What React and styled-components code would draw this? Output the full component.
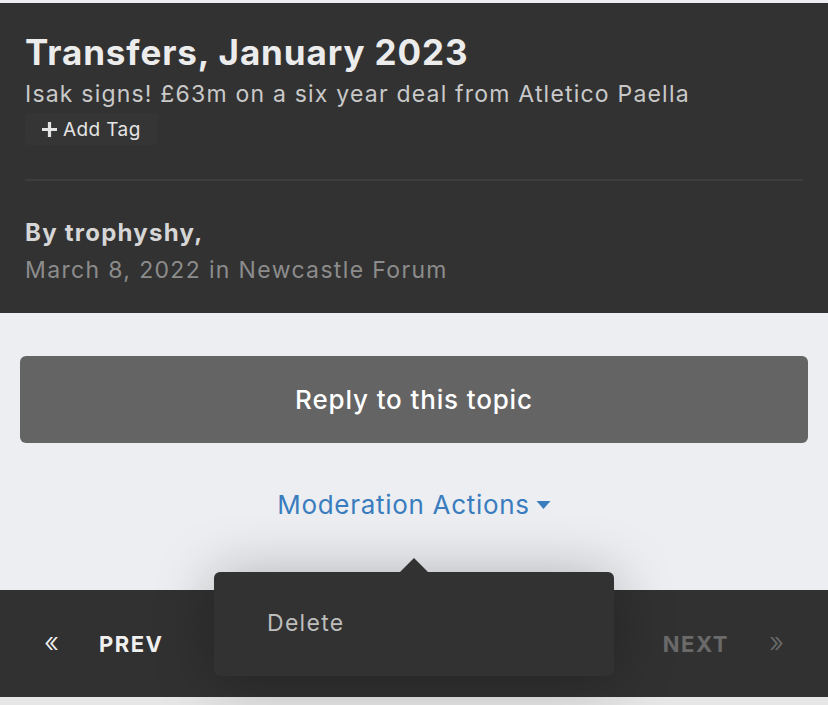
import React from 'react';
import styled, {createGlobalStyle} from 'styled-components';

const GlobalStyle = createGlobalStyle`
  body {
    margin: 0;
    background: #eceef1;
    font-family: Inter, "Noto Sans", sans-serif;
    -webkit-font-smoothing: antialiased;
  }
`;

export default function App() {
  return (
    <Page>
      <GlobalStyle />
      <Header>
        <Title>Transfers, January 2023</Title>
        <Subtitle>Isak signs! £63m on a six year deal from Atletico Paella</Subtitle>
        <TagButton>
          <PlusIcon viewBox="0 0 14 14">
            <path d="M5.5 0h3v5.5H14v3H8.5V14h-3V8.5H0v-3h5.5z" fill="currentColor" />
          </PlusIcon>
          Add Tag
        </TagButton>
        <Divider />
        <Author>By trophyshy,</Author>
        <Meta>March 8, 2022 in Newcastle Forum</Meta>
      </Header>
      <Main>
        <ReplyButton>Reply to this topic</ReplyButton>
        <ModWrap>
          <ModLink>
            Moderation Actions
            <Caret viewBox="0 0 14 9">
              <path d="M0 0h14L7 8z" fill="currentColor" />
            </Caret>
          </ModLink>
          <Menu>
            <MenuItem>Delete</MenuItem>
          </Menu>
        </ModWrap>
      </Main>
      <Pager>
        <PageLink>
          <Chevrons>«</Chevrons>
          PREV
        </PageLink>
        <PageLink $disabled>
          NEXT
          <Chevrons>»</Chevrons>
        </PageLink>
      </Pager>
      <BottomStrip />
    </Page>
  );
}

const Page = styled.div`
  padding-top: 3px;
  min-height: 702px;
  display: flex;
  flex-direction: column;
`;

const Header = styled.header`
  background: #323232;
  padding: 28px 25px 28px 25px;
  height: 310px;
  box-sizing: border-box;
  display: flex;
  flex-direction: column;
  align-items: flex-start;
`;

const Title = styled.h1`
  margin: 0;
  font-size: 35px;
  font-weight: 700;
  letter-spacing: 0.9px;
  color: #ececec;
  line-height: 42px;
`;

const Subtitle = styled.p`
  margin: 6px 0 0;
  font-size: 23px;
  letter-spacing: 1.2px;
  color: #c9c9c9;
  line-height: 30px;
`;

const TagButton = styled.button`
  display: flex;
  align-items: center;
  gap: 6px;
  margin-top: 4px;
  height: 34px;
  padding: 0 17px;
  border: 0;
  background: #353535;
  color: #e4e4e4;
  font-family: inherit;
  font-size: 19px;
  letter-spacing: 0.4px;
  border-radius: 2px;
`;

const PlusIcon = styled.svg`
  width: 15px;
  height: 15px;
`;

const Divider = styled.hr`
  align-self: stretch;
  margin: 34px 0 0;
  border: 0;
  height: 2px;
  background: #3d3d3d;
`;

const Author = styled.div`
  margin-top: 37px;
  font-size: 24px;
  font-weight: 700;
  letter-spacing: 1.25px;
  color: #d6d6d6;
  line-height: 30px;
`;

const Meta = styled.div`
  margin-top: 7px;
  font-size: 23px;
  letter-spacing: 1.35px;
  color: #8c8c8c;
  line-height: 30px;
`;

const Main = styled.main`
  padding: 43px 20px 0;
  display: flex;
  flex-direction: column;
  align-items: stretch;
  height: 277px;
  box-sizing: border-box;
`;

const ReplyButton = styled.button`
  height: 87px;
  border: 0;
  border-radius: 6px;
  background: #646464;
  color: #ffffff;
  font-family: inherit;
  font-size: 26px;
  letter-spacing: 0.85px;
  font-weight: 500;
`;

const ModWrap = styled.div`
  position: relative;
  align-self: center;
  margin-top: 45px;
`;

const ModLink = styled.a`
  display: flex;
  align-items: center;
  gap: 6px;
  color: #3a7dbf;
  font-size: 26px;
  letter-spacing: 0.7px;
  line-height: 34px;
`;

const Caret = styled.svg`
  width: 15px;
  height: 9px;
`;

const Menu = styled.div`
  position: absolute;
  z-index: 2;
  top: 84px;
  left: 50%;
  transform: translateX(-50%);
  width: 400px;
  height: 104px;
  box-sizing: border-box;
  padding: 37px 53px;
  background: #323232;
  border-radius: 6px;
  box-shadow: 0 4px 60px rgba(0, 0, 0, 0.28);
  &::before {
    content: '';
    position: absolute;
    top: -14px;
    left: 50%;
    margin-left: -15px;
    border: 15px solid transparent;
    border-top: 0;
    border-bottom: 15px solid #323232;
  }
`;

const MenuItem = styled.div`
  color: #bdbdbd;
  font-size: 23px;
  letter-spacing: 1.3px;
  line-height: 28px;
`;

const Pager = styled.nav`
  background: #313131;
  height: 107px;
  display: flex;
  align-items: center;
  justify-content: space-between;
  padding: 0 44px;
`;

const PageLink = styled.a`
  display: flex;
  align-items: center;
  gap: 40px;
  font-size: 22px;
  font-weight: 700;
  letter-spacing: 1.5px;
  color: ${p => (p.$disabled ? '#6a6a6a' : '#f0f0f0')};
`;

const Chevrons = styled.span`
  font-size: 28px;
  font-weight: 300;
  letter-spacing: 0;
  line-height: 1;
  margin-top: -4px;
`;

const BottomStrip = styled.div`
  height: 8px;
  background: #e6e6e6;
`;
